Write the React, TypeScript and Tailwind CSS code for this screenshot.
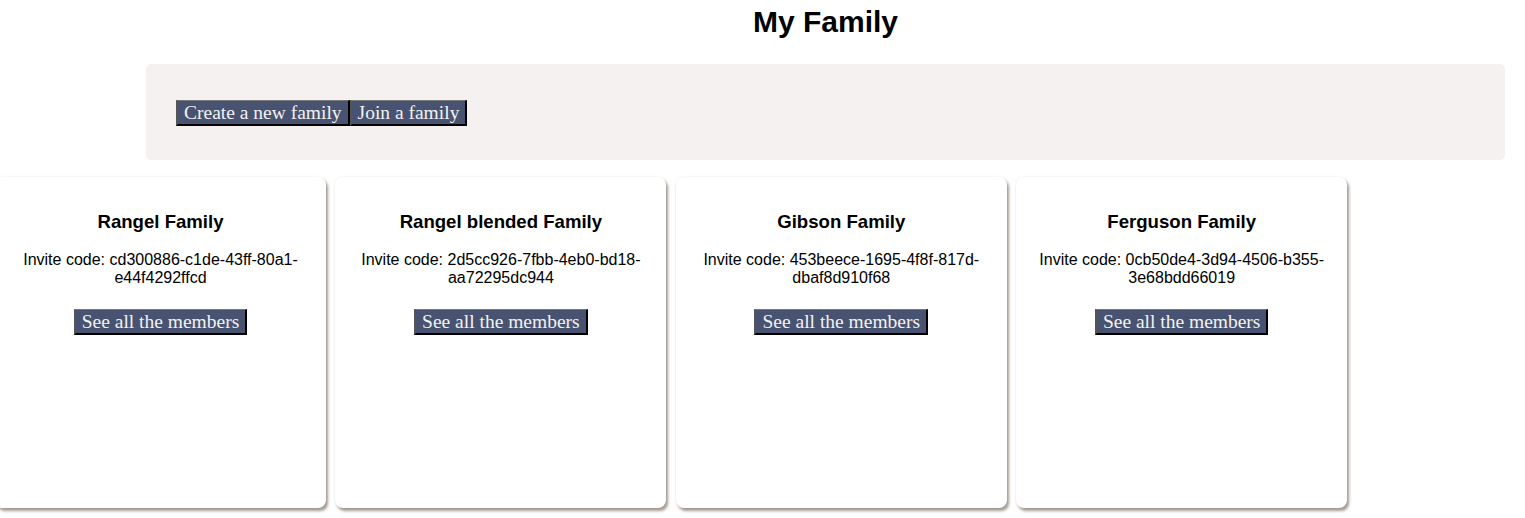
const families = [
  { name: "Rangel Family", code: "cd300886-c1de-43ff-80a1-e44f4292ffcd" },
  { name: "Rangel blended Family", code: "2d5cc926-7fbb-4eb0-bd18-aa72295dc944" },
  { name: "Gibson Family", code: "453beece-1695-4f8f-817d-dbaf8d910f68" },
  { name: "Ferguson Family", code: "0cb50de4-3d94-4506-b355-3e68bdd66019" },
]

function OldButton({ children }: { children: React.ReactNode }) {
  return (
    <button className="h-[26px] px-[6px] bg-[#475370] text-[#f2f2f2] text-[19.5px] leading-none font-['Liberation_Serif',Georgia,serif] border-t border-l-2 border-r-2 border-b-2 border-t-[#777] border-l-[#555] border-r-black border-b-black">
      {children}
    </button>
  )
}

export default function App() {
  return (
    <div className="min-h-screen bg-white font-['Liberation_Sans',Arial,sans-serif] text-black overflow-hidden">
      <div className="ml-[146px] mr-[20px]">
        <h1 className="text-[30px] font-bold text-center leading-none pt-[7px] h-[64px]">My Family</h1>
        <div className="bg-[#f5f1f0] rounded-[5px] h-[96px] pl-[30px] pt-[36px] flex items-start">
          <OldButton>Create a new family</OldButton>
          <OldButton>Join a family</OldButton>
        </div>
      </div>

      <div className="flex gap-[9.4px] -ml-[5px] mt-[17px]">
        {families.map((f) => (
          <div
            key={f.name}
            className="w-[331px] h-[331px] shrink-0 bg-white rounded-[8px] shadow-[2px_3px_3px_rgba(90,72,58,0.55),0_0_3px_rgba(0,0,0,0.08)] px-[20px] pt-[35px] text-center"
          >
            <h3 className="text-[18.6px] font-bold leading-[20px]">{f.name}</h3>
            <p className="text-[16px] leading-[18px] mt-[19px]">Invite code: {f.code}</p>
            <div className="mt-[22px]">
              <OldButton>See all the members</OldButton>
            </div>
          </div>
        ))}
      </div>
    </div>
  )
}
